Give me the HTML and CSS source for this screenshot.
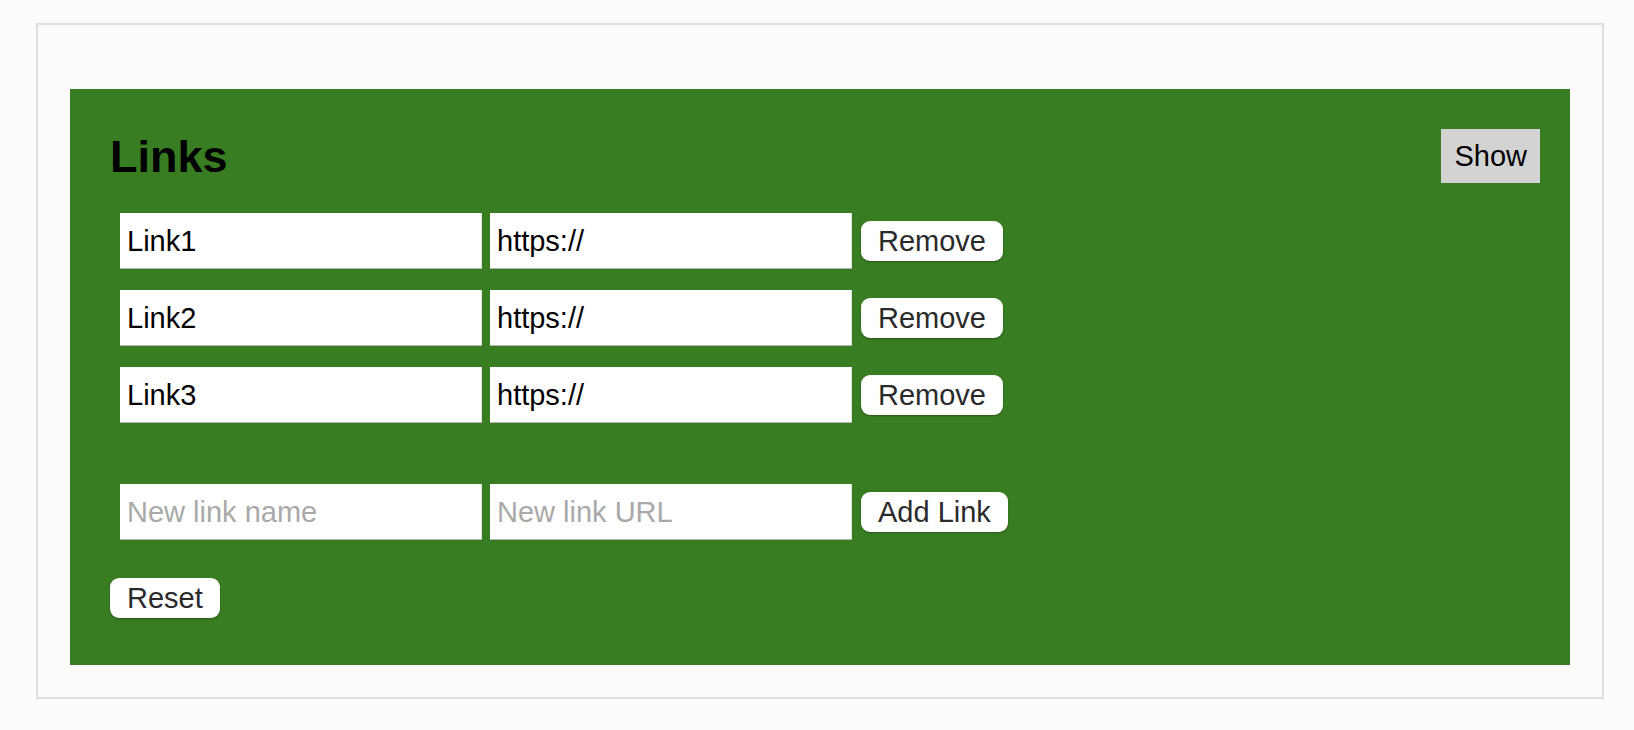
FILE: index.html
```html
<!DOCTYPE html>
<html lang="en">
<head>
<meta charset="utf-8">
<title>Links</title>
<link rel="stylesheet" href="styles.css">
</head>
<body>
<div class="frame">
  <section class="panel">
    <header class="panel-head">
      <h2 class="title">Links</h2>
      <button class="toggle" type="button">Show</button>
    </header>
    <div class="links">
      <div class="row">
        <input class="field" type="text" value="Link1">
        <input class="field" type="text" value="https://">
        <button class="btn" type="button">Remove</button>
      </div>
      <div class="row">
        <input class="field" type="text" value="Link2">
        <input class="field" type="text" value="https://">
        <button class="btn" type="button">Remove</button>
      </div>
      <div class="row">
        <input class="field" type="text" value="Link3">
        <input class="field" type="text" value="https://">
        <button class="btn" type="button">Remove</button>
      </div>
      <div class="row row-new">
        <input class="field" type="text" placeholder="New link name">
        <input class="field" type="text" placeholder="New link URL">
        <button class="btn" type="button">Add Link</button>
      </div>
    </div>
    <div class="footer">
      <button class="btn" type="button">Reset</button>
    </div>
  </section>
</div>
</body>
</html>
```

FILE: styles.css
```css
html, body {
  margin: 0;
  padding: 0;
  background: #fcfbf9;
  font-family: "Liberation Sans", Arial, sans-serif;
}

.frame {
  margin: 23px 30px 0 36px;
  border: 2px solid #dfdedc;
  padding: 64px 32px 32px 32px;
  background: #fcfbf9;
}

.panel {
  background: #387d22;
  padding: 40px 30px 47px 40px;
  height: 576px;
  box-sizing: border-box;
}

.panel-head {
  display: flex;
  align-items: center;
  justify-content: space-between;
  height: 54px;
}

.title {
  margin: 0;
  font-size: 45px;
  font-weight: bold;
  color: #000;
  line-height: 1;
}

.toggle {
  height: 54px;
  padding: 0 13px;
  border: none;
  border-radius: 0;
  background: #d3d3d3;
  color: #000;
  font-family: "Liberation Sans", Arial, sans-serif;
  font-size: 29px;
}

.links {
  margin: 30px 0 0 10px;
  display: flex;
  flex-direction: column;
  gap: 21px;
}

.row {
  display: flex;
  align-items: center;
}

.row-new {
  margin-top: 40px;
}

.field {
  width: 362px;
  height: 56px;
  box-sizing: border-box;
  margin: 0 8px 0 0;
  padding: 0 7px;
  border: none;
  background: #fff;
  box-shadow: inset 0 -1px 0 #b4b4b4, inset -1px 0 0 #e2e2e2;
  font-family: "Liberation Sans", Arial, sans-serif;
  font-size: 29px;
  color: #000;
  outline: none;
}

.field::placeholder {
  color: #a9a9a9;
}

.row .btn {
  margin-left: 1px;
}

.btn {
  height: 40px;
  padding: 0 17px;
  border: none;
  border-radius: 9px;
  background: #fff;
  color: #2a2a2a;
  font-family: "Liberation Sans", Arial, sans-serif;
  font-size: 29px;
  box-shadow: 0 1px 2px rgba(0, 0, 0, 0.3);
}

.footer {
  margin-top: 38px;
}
```
